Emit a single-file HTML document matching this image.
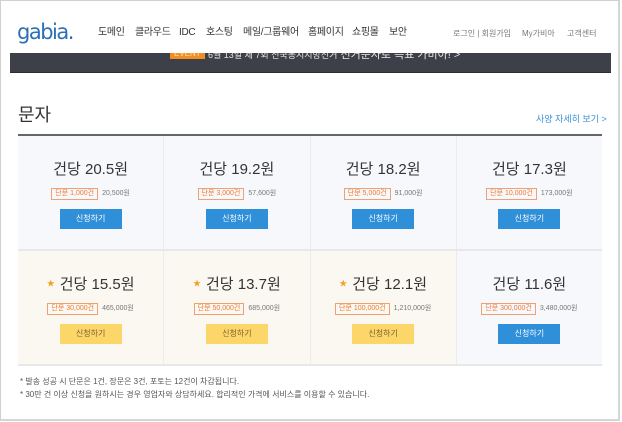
<!DOCTYPE html>
<html><head><meta charset="utf-8"><style>
*{margin:0;padding:0;box-sizing:border-box}
body{width:622px;height:422px;background:#fff;font-family:"Liberation Sans","Noto Sans CJK KR",sans-serif;position:relative;overflow:hidden}
.frame{position:absolute;left:0;top:0;width:620px;height:421px;border:1px solid #d0d0d0;border-right:2px solid #d6d6d6;border-bottom:2px solid #d6d6d6}
.abs{position:absolute;white-space:nowrap}
.logo{left:17px;top:20px;font-size:21px;color:#2a6fb8;letter-spacing:-1.5px;font-family:"DejaVu Sans",sans-serif}
.nav{top:26px;font-size:10px;line-height:14px;color:#333;letter-spacing:-0.3px}
.util{top:28px;font-size:8px;color:#777}
.banner{left:10px;top:53px;width:601px;height:20px;background:#3d4048;overflow:hidden;border-bottom:1px solid #2b2d33}
.ev{left:160px;top:-2px;background:#f28d22;color:#fde0b8;font-size:8px;padding:0 4px;height:8px;line-height:6px}
.bt{left:198px;top:-7px;color:#e6e6e6;font-size:11px}
.title{left:18px;top:101px;font-size:18px;color:#333}
.more{left:536px;top:112px;font-size:9px;color:#3a8fd6}
.line{left:18px;top:134px;width:584px;height:2px;background:#666}
.grid{position:absolute;left:18px;top:136px;width:584px}
.row{display:flex;height:115px;border-bottom:2px solid #e8e8e8}
.cell{flex:1;text-align:center;position:relative;border-right:1px solid #ececec}
.cell:last-child{border-right:none}
.b{background:#f7f8fb}.y{background:#fbf8f1}
.p{position:absolute;left:0;right:0;top:22px;font-size:15px;color:#333}
.star{color:#f2a020;font-size:8px;vertical-align:3px;margin-right:5px}
.t{position:absolute;left:0;right:0;top:52px;font-size:7px;color:#777}
.tag{display:inline-block;border:1px solid #f3a070;color:#f07830;padding:0 3px;height:12px;line-height:10px;margin-right:4px}
.btn{position:absolute;left:50%;margin-left:-31px;top:73px;width:62px;height:20px;line-height:20px;font-size:8px;color:#fff;background:#2f8fd8}
.yb{background:#fdd66a;color:#7a6030}
.note{left:20px;font-size:8px;color:#555}
</style></head><body>
<div class="frame"></div>
<div class="abs logo">gabia.</div>
<div class="abs nav" style="left:98px">도메인</div>
<div class="abs nav" style="left:135px">클라우드</div>
<div class="abs nav" style="left:179px">IDC</div>
<div class="abs nav" style="left:206px">호스팅</div>
<div class="abs nav" style="left:243px">메일/그룹웨어</div>
<div class="abs nav" style="left:308px">홈페이지</div>
<div class="abs nav" style="left:352px">쇼핑몰</div>
<div class="abs nav" style="left:389px">보안</div>
<div class="abs util" style="left:453px">로그인 | 회원가입</div>
<div class="abs util" style="left:522px">My가비아</div>
<div class="abs util" style="left:567px">고객센터</div>
<div class="banner abs"><div class="abs ev">EVENT</div><div class="abs bt"><span style="font-size:9px">6월 13일 제 7회 전국동시지방선거</span> 선거문자로 득표 가비아! &gt;</div></div>
<div class="abs title">문자</div>
<div class="abs more">사양 자세히 보기 &gt;</div>
<div class="abs line"></div>
<div class="grid">
<div class="row">
<div class="cell b"><div class="p">건당 20.5원</div><div class="t"><span class="tag">단문 1,000건</span>20,500원</div><div class="btn">신청하기</div></div>
<div class="cell b"><div class="p">건당 19.2원</div><div class="t"><span class="tag">단문 3,000건</span>57,600원</div><div class="btn">신청하기</div></div>
<div class="cell b"><div class="p">건당 18.2원</div><div class="t"><span class="tag">단문 5,000건</span>91,000원</div><div class="btn">신청하기</div></div>
<div class="cell b"><div class="p">건당 17.3원</div><div class="t"><span class="tag">단문 10,000건</span>173,000원</div><div class="btn">신청하기</div></div>
</div>
<div class="row">
<div class="cell y"><div class="p"><span class="star">★</span>건당 15.5원</div><div class="t"><span class="tag">단문 30,000건</span>465,000원</div><div class="btn yb">신청하기</div></div>
<div class="cell y"><div class="p"><span class="star">★</span>건당 13.7원</div><div class="t"><span class="tag">단문 50,000건</span>685,000원</div><div class="btn yb">신청하기</div></div>
<div class="cell y"><div class="p"><span class="star">★</span>건당 12.1원</div><div class="t"><span class="tag">단문 100,000건</span>1,210,000원</div><div class="btn yb">신청하기</div></div>
<div class="cell b"><div class="p">건당 11.6원</div><div class="t"><span class="tag">단문 300,000건</span>3,480,000원</div><div class="btn">신청하기</div></div>
</div>
</div>
<div class="abs note" style="top:376px">* 발송 성공 시 단문은 1건, 장문은 3건, 포토는 12건이 차감됩니다.</div>
<div class="abs note" style="top:389px">* 30만 건 이상 신청을 원하시는 경우 영업자와 상담하세요. 합리적인 가격에 서비스를 이용할 수 있습니다.</div>
</body></html>
